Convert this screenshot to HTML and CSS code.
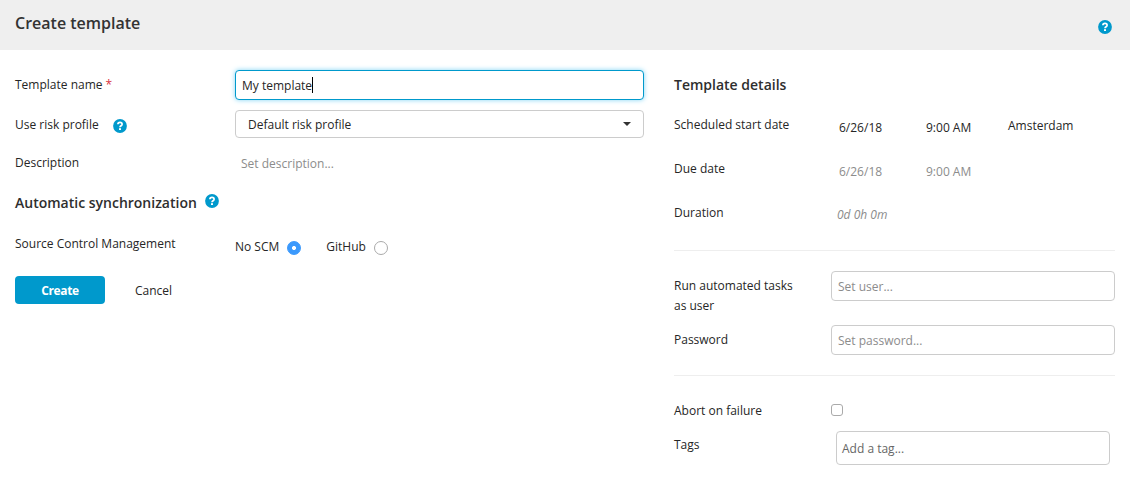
FILE: index.html
```html
<!DOCTYPE html>
<html lang="en">
<head>
<meta charset="utf-8">
<title>Create template</title>
<link rel="stylesheet" href="styles.css">
</head>
<body>
<svg class="defs" aria-hidden="true">
  <symbol id="help" viewBox="0 0 14 14">
    <circle cx="7" cy="7" r="6.9" fill="#0099cc"/>
    <path d="M4.9 5.3C4.9 4 5.8 3.4 7 3.4s2.1.7 2.1 1.8C9.1 6.7 7 6.8 7 8.3" fill="none" stroke="#fff" stroke-width="1.7"/>
    <rect x="6" y="9.2" width="2" height="1.8" fill="#fff"/>
  </symbol>
</svg>
<header class="header">
  <h1 class="title">Create template</h1>
  <svg class="help help-page"><use href="#help"/></svg>
</header>
<main class="content">
  <section class="main-form">
    <div class="row row-name">
      <div class="label">Template name <span class="required">*</span></div>
      <div class="input focused">My template<span class="caret"></span></div>
    </div>
    <div class="row row-risk">
      <div class="label">Use risk profile<svg class="help help-risk"><use href="#help"/></svg></div>
      <div class="select">Default risk profile<span class="arrow"></span></div>
    </div>
    <div class="row row-description">
      <div class="label">Description</div>
      <div class="placeholder description">Set description...</div>
    </div>
    <h2 class="heading heading-sync">Automatic synchronization<svg class="help help-sync"><use href="#help"/></svg></h2>
    <div class="row row-scm">
      <div class="label">Source Control Management</div>
      <div class="radios">
        <span class="radio-label first">No SCM</span><span class="radio checked"></span>
        <span class="radio-label second">GitHub</span><span class="radio"></span>
      </div>
    </div>
    <div class="actions">
      <button class="create">Create</button>
      <a class="cancel">Cancel</a>
    </div>
  </section>
  <aside class="details">
    <h2 class="heading">Template details</h2>
    <div class="detail-row start">
      <div class="label">Scheduled start date</div>
      <div class="dates"><span class="date">6/26/18</span><span class="time">9:00 AM</span><span class="zone">Amsterdam</span></div>
    </div>
    <div class="detail-row due">
      <div class="label">Due date</div>
      <div class="dates placeholder"><span class="date">6/26/18</span><span class="time">9:00 AM</span></div>
    </div>
    <div class="detail-row duration">
      <div class="label">Duration</div>
      <div class="duration-value placeholder">0d 0h 0m</div>
    </div>
    <div class="group group-user">
      <div class="detail-row">
        <div class="label label-user">Run automated tasks as user</div>
        <div class="input placeholder">Set user...</div>
      </div>
      <div class="detail-row">
        <div class="label">Password</div>
        <div class="input placeholder">Set password...</div>
      </div>
    </div>
    <div class="group group-tags">
      <div class="detail-row abort">
        <div class="label">Abort on failure</div>
        <div class="checkbox"></div>
      </div>
      <div class="detail-row">
        <div class="label label-tags">Tags</div>
        <div class="input tags">Add a tag...</div>
      </div>
    </div>
  </aside>
</main>
</body>
</html>
```
FILE: styles.css
```css
* { box-sizing: border-box; }
body {
  margin: 0;
  background: #fff;
  color: #262626;
  font: 12px/20px "Open Sans", "Noto Sans", sans-serif;
}
.defs { display: none; }
.header {
  display: flex;
  justify-content: space-between;
  height: 50px;
  padding: 13px 18.5px 0 15px;
  background: #efefef;
}
.title { margin: 0; font-size: 16px; line-height: 20px; font-weight: 600; color: #333; }
.heading { margin: 0; font-size: 14px; line-height: 20px; font-weight: 600; color: #2e2e2e; }
.help { width: 14px; height: 14px; flex: none; }
.help-page { margin-top: 6.5px; }
.help-risk { margin: 3.5px 0 0 14px; }
.help-sync { margin: 0.5px 0 0 8px; }
.content { display: flex; gap: 30px; padding: 20px 15px 0; }
.main-form { width: 629px; }
.row { display: grid; grid-template-columns: 220px 1fr; }
.label { display: flex; padding-top: 5px; }
.required { color: #d9333f; margin-left: 3px; }
.input {
  height: 30px;
  padding: 5px 6px 3px;
  border: 1px solid #ccc;
  border-radius: 4px;
  background: #fff;
}
.input.focused {
  display: flex;
  border-color: #0099cc;
  box-shadow: 0 0 5px #7fd4f5;
}
.caret { width: 1px; height: 16px; margin-top: 1px; background: #000; }
.row-name { height: 40px; }
.row-risk { height: 38px; }
.select {
  display: flex;
  justify-content: space-between;
  height: 28px;
  padding: 4px 12px;
  border: 1px solid #ccc;
  border-radius: 4px;
}
.arrow {
  margin-top: 7px;
  width: 8px;
  height: 4px;
  background: #333;
  clip-path: polygon(0 0, 100% 0, 50% 100%);
}
.row-description { height: 45px; }
.placeholder { color: #8c8c8c; }
.description { padding: 6px 6px; }
.heading-sync { display: flex; height: 40px; }
.row-scm { height: 43px; }
.row-scm .label { padding-top: 1px; }
.radios { display: flex; padding-top: 4px; }
.radio-label.second { margin-left: 25px; }
.radio {
  width: 14px;
  height: 14px;
  margin: 4px 0 0 8px;
  border: 1px solid #aaa;
  border-radius: 50%;
}
.radio.checked {
  border-color: #3b99fc;
  background: radial-gradient(circle, #fff 0 1.7px, #3b99fc 2.3px);
}
.actions { display: flex; gap: 30px; line-height: 28px; }
.create {
  width: 90px;
  height: 28px;
  padding: 1px 0 0;
  border: 0;
  border-radius: 4px;
  background: #0099cc;
  color: #fff;
  font: 700 12px/27px "Open Sans", "Noto Sans", sans-serif;
  letter-spacing: -0.4px;
}
.cancel { padding-top: 1px; }
.details { width: 441px; padding-top: 5px; }
.detail-row { display: grid; grid-template-columns: 157px 1fr; }
.start, .due { height: 44px; }
.start { margin-top: 15px; }
.dates { display: grid; grid-template-columns: 87px 82px 1fr; padding: 8px 0 0 8px; }
.zone { margin-top: -2px; }
.duration { height: 52px; }
.duration-value { padding: 7px 6px 0; font-style: italic; }
.group { border-top: 1px solid #eee; }
.group-user { height: 125px; padding-top: 20px; display: grid; grid-template-rows: 54px 30px; }
.label-user { padding-right: 30px; }
.group-tags { padding-top: 20px; }
.abort { height: 35px; }
.checkbox { width: 12px; height: 12px; margin-top: 8px; border: 1px solid #aaa; border-radius: 3px; }
.tags { height: 34px; margin: 0 5px; padding: 7px 5px; color: #666; }
.label-tags { padding-top: 4px; }
```
